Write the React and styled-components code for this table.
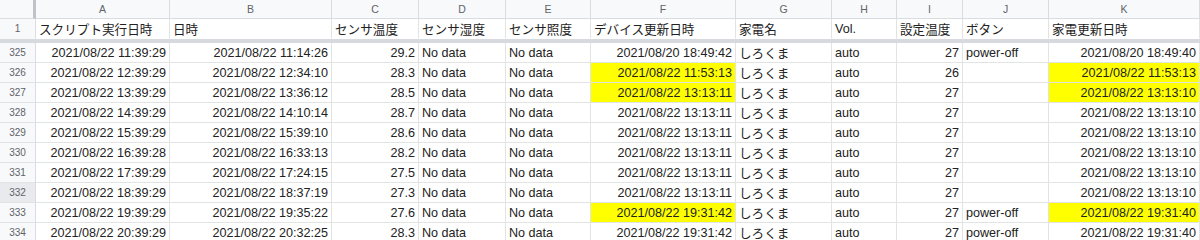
import React from "react";
import styled, { createGlobalStyle } from "styled-components";

const Global = createGlobalStyle`
  html, body { margin: 0; padding: 0; background: #fff; }
  body { font-family: "Liberation Sans", "Noto Sans CJK JP", sans-serif; }
`;

const COLS = "36px 134px 162px 87px 87px 85px 145px 96px 65px 66px 86px 1fr";

const Sheet = styled.div`
  width: 1200px;
  height: 240px;
  overflow: hidden;
  display: flex;
  flex-direction: column;
`;

const Row = styled.div`
  display: grid;
  grid-template-columns: ${COLS};
  height: ${(p) => p.$h}px;
  flex: none;
`;

const Corner = styled.div`
  background: #f8f9fa;
  border-right: 3px solid #bfc3c8;
  border-bottom: 1px solid #dadce0;
  box-sizing: border-box;
`;

const ColLetter = styled.div`
  background: #f8f9fa;
  border-right: 1px solid #dadce0;
  border-bottom: 1px solid #dadce0;
  box-sizing: border-box;
  display: flex;
  align-items: center;
  justify-content: center;
  font-family: "Liberation Sans", sans-serif;
  font-size: 10.5px;
  color: #5f6368;
`;

const RowNum = styled.div`
  background: ${(p) => (p.$active ? "#e8eaed" : "#f8f9fa")};
  border-right: 1px solid #dadce0;
  border-bottom: 1px solid ${(p) => (p.$noBottom ? "transparent" : "#e2e3e3")};
  box-sizing: border-box;
  display: flex;
  align-items: center;
  justify-content: center;
  font-family: "Liberation Sans", sans-serif;
  font-size: 10px;
  color: #5f6368;
`;

const Cell = styled.div`
  background: ${(p) => (p.$hl ? "#ffff00" : "#fff")};
  border-right: 1px solid #e2e3e3;
  border-bottom: 1px solid ${(p) => (p.$noBottom ? "transparent" : "#e2e3e3")};
  box-sizing: border-box;
  display: flex;
  align-items: center;
  justify-content: ${(p) => (p.$right ? "flex-end" : "flex-start")};
  padding: 0 3px 0 3px;
  font-family: "Liberation Sans", "Noto Sans CJK JP", sans-serif;
  font-size: 12.6px;
  color: #222;
  white-space: nowrap;
  overflow: hidden;
`;

const FreezeBar = styled.div`
  height: 4px;
  background: #d6d9dd;
  flex: none;
`;

const letters = ["A", "B", "C", "D", "E", "F", "G", "H", "I", "J", "K"];
const headers = [
  "スクリプト実行日時",
  "日時",
  "センサ温度",
  "センサ湿度",
  "センサ照度",
  "デバイス更新日時",
  "家電名",
  "Vol.",
  "設定温度",
  "ボタン",
  "家電更新日時",
];
const rightAligned = [true, true, true, false, false, true, false, false, true, false, true];

const d = (s) => `2021/08/${s}`;
const rows = [
  [325, "22 11:39:29", "22 11:14:26", "29.2", "20 18:49:42", false, "27", "power-off", "20 18:49:40", false],
  [326, "22 12:39:29", "22 12:34:10", "28.3", "22 11:53:13", true, "26", "", "22 11:53:13", true],
  [327, "22 13:39:29", "22 13:36:12", "28.5", "22 13:13:11", true, "27", "", "22 13:13:10", true],
  [328, "22 14:39:29", "22 14:10:14", "28.7", "22 13:13:11", false, "27", "", "22 13:13:10", false],
  [329, "22 15:39:29", "22 15:39:10", "28.6", "22 13:13:11", false, "27", "", "22 13:13:10", false],
  [330, "22 16:39:28", "22 16:33:13", "28.2", "22 13:13:11", false, "27", "", "22 13:13:10", false],
  [331, "22 17:39:29", "22 17:24:15", "27.5", "22 13:13:11", false, "27", "", "22 13:13:10", false],
  [332, "22 18:39:29", "22 18:37:19", "27.3", "22 13:13:11", false, "27", "", "22 13:13:10", false],
  [333, "22 19:39:29", "22 19:35:22", "27.6", "22 19:31:42", true, "27", "power-off", "22 19:31:40", true],
  [334, "22 20:39:29", "22 20:32:25", "28.3", "22 19:31:42", false, "27", "power-off", "22 19:31:40", false],
];

export default function App() {
  return (
    <>
      <Global />
      <Sheet>
        <Row $h={19}>
          <Corner />
          {letters.map((l) => (
            <ColLetter key={l}>{l}</ColLetter>
          ))}
        </Row>
        <Row $h={20}>
          <RowNum $noBottom>1</RowNum>
          {headers.map((h) => (
            <Cell key={h} $noBottom>
              {h}
            </Cell>
          ))}
        </Row>
        <FreezeBar />
        {rows.map(([n, a, b, c, f, fHl, i, j, k, kHl]) => {
          const vals = [d(a), d(b), c, "No data", "No data", d(f), "しろくま", "auto", i, j, d(k)];
          return (
            <Row $h={n === 325 ? 20 : 20} key={n}>
              <RowNum $active={n === 332}>{n}</RowNum>
              {vals.map((v, idx) => (
                <Cell
                  key={idx}
                  $right={rightAligned[idx]}
                  $hl={(idx === 5 && fHl) || (idx === 10 && kHl)}
                >
                  {v}
                </Cell>
              ))}
            </Row>
          );
        })}
      </Sheet>
    </>
  );
}
